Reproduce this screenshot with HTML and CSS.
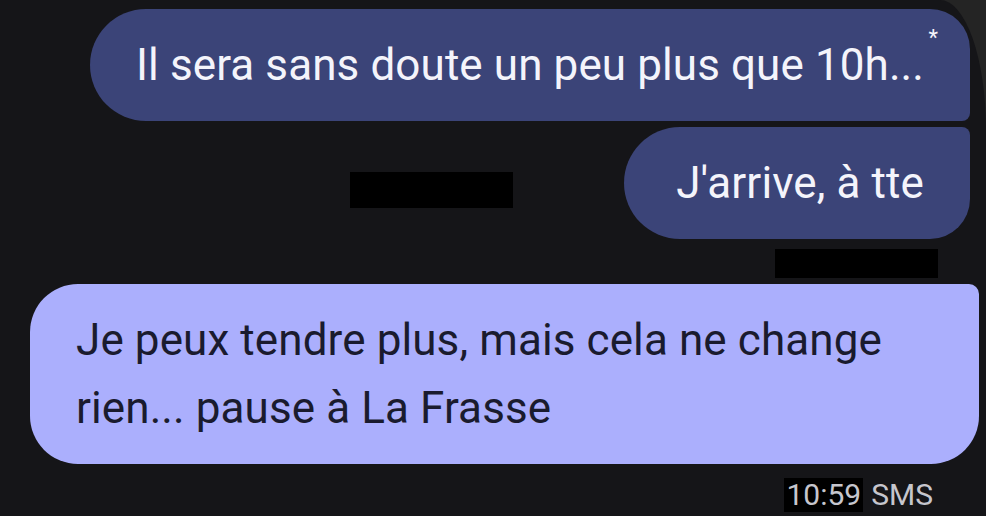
FILE: index.html
```html
<html lang="en">
<head>
    <meta charset="UTF-8">
    <meta name="viewport" content="width=device-width, initial-scale=1.0">
    <link rel="stylesheet" href="styles.css">
</head>
<body>
    <div class="screen">
        <div class="row sent">
            <div class="bubble sent first">
                Il sera sans doute un peu plus que 10h...
                <span class="star">*</span>
            </div>
        </div>

        <div class="row sent">
            <div class="redact redact-name"></div>
            <div class="bubble sent last">J'arrive, à tte</div>
        </div>

        <div class="status">
            <div class="redact redact-status"></div>
        </div>

        <div class="row received">
            <div class="bubble received">Je peux tendre plus, mais cela ne change rien... pause à La Frasse</div>
        </div>

        <div class="meta">
            <span class="time">10:59</span>
            <span class="kind">SMS</span>
        </div>
    </div>
</body>
</html>
```

FILE: styles.css
```css
body {
    margin: 0;
    background-color: #242424;
    font-family: Roboto, "Noto Sans", sans-serif;
}
.screen {
    min-height: 516px;
    box-sizing: border-box;
    padding-top: 9px;
    background-color: #151518;
    border-top-right-radius: 46px 130px;
    overflow: hidden;
}
.row {
    display: flex;
}
.row.sent {
    justify-content: flex-end;
    align-items: flex-start;
    padding-right: 16px;
    margin-bottom: 6px;
}
.bubble {
    position: relative;
    font-size: 44px;
    letter-spacing: 0.1px;
    line-height: 68px;
    padding: 22px 46px;
}
.bubble.sent {
    background-color: #3b4478;
    color: #f4f4fb;
    border-radius: 56px;
}
.bubble.sent.first {
    border-radius: 56px 40px 8px 56px;
}
.bubble.sent.last {
    border-radius: 56px 8px 40px 56px;
    padding-left: 52px;
}
.star {
    position: absolute;
    top: 18px;
    right: 32px;
    font-size: 22px;
    line-height: 1;
}
.redact {
    background-color: #000;
}
.redact-name {
    width: 163px;
    height: 36px;
    margin-top: 45px;
    margin-right: 111px;
}
.status {
    display: flex;
    justify-content: flex-end;
    height: 35px;
    padding-top: 7px;
    padding-right: 48px;
    margin-top: -3px;
}
.redact-status {
    width: 163px;
    height: 29px;
}
.row.received {
    padding: 0 7px 0 30px;
}
.bubble.received {
    flex: 1;
    background-color: #abaffd;
    color: #1a1b2e;
    padding: 22px 46px 22px 46px;
    border-radius: 48px 10px 48px 48px;
}
.meta {
    display: flex;
    justify-content: flex-end;
    align-items: center;
    gap: 8px;
    padding-right: 53px;
    margin-top: 13px;
    font-size: 30px;
    color: #c6c6cd;
}
.time {
    background-color: #000;
    padding: 0 2px;
    line-height: 34px;
}
```
